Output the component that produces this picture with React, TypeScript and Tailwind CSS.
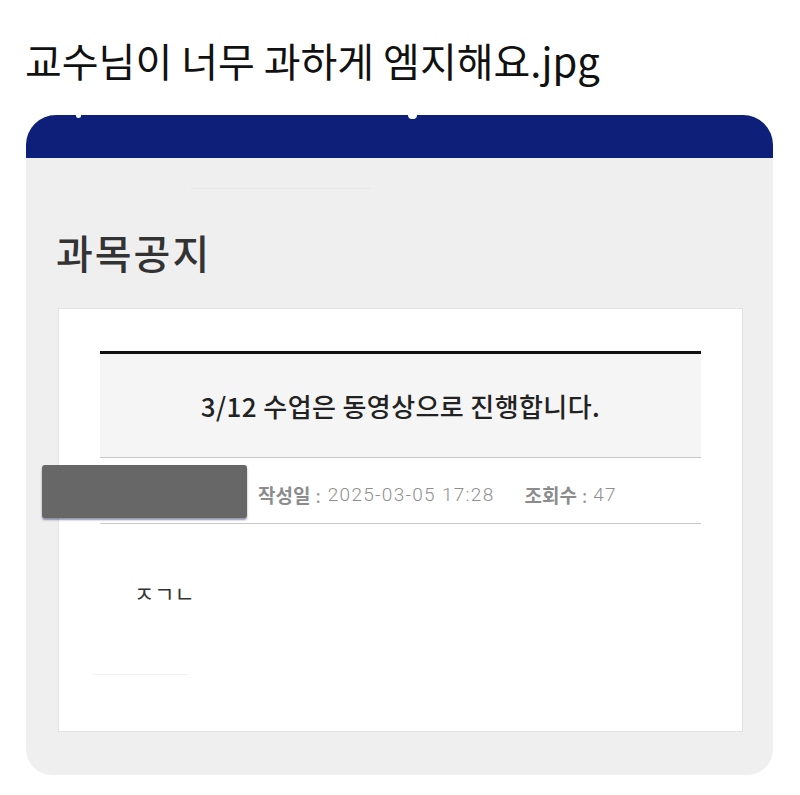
import React from "react";

const KR = { fontFamily: '"Noto Sans CJK KR", "Noto Sans", sans-serif' };
const NUM = { fontFamily: 'Roboto, "Noto Sans CJK KR", sans-serif' };

export default function App() {
  return (
    <div className="w-[800px] h-[795px] bg-white overflow-hidden" style={KR}>
      {/* post title */}
      <h1 className="pl-[25px] pt-[31px] text-[40px] leading-[58px] font-normal text-[#111]">
        교수님이 너무 과하게 엠지해요.jpg
      </h1>

      {/* captured app screen */}
      <div className="ml-[26px] mt-[26px] w-[747px]">
        <div className="relative h-[43px] bg-[#0e1f7a] rounded-t-[30px]">
          <span className="absolute left-[50px] top-0 w-[5px] h-[3px] bg-white rounded-b-full" />
          <span className="absolute left-[382px] top-0 w-[9px] h-[4px] bg-white rounded-b-full" />
        </div>
        <div className="bg-[#efefef] rounded-b-[26px] pb-[43px]">
          <div className="relative pt-[69px] pl-[30px] h-[150px]">
            <span className="absolute left-[165px] top-[30px] w-[180px] h-px bg-[#e6e6e6]" />
            <h2 className="text-[40px] leading-[50px] font-medium text-[#333] tracking-[2px]">과목공지</h2>
          </div>

          <div className="ml-[32px] mr-[30px] h-[424px] bg-white border border-[#e3e3e3] px-[41px] pt-[42px]">
            <div className="h-[3px] bg-[#111]" />
            <div className="h-[103px] bg-[#f5f5f5] flex items-center justify-center">
              <p className="text-[26px] font-medium text-[#222] tracking-[0.4px]">
                3/12 수업은 동영상으로 진행합니다.
              </p>
            </div>
            <div className="h-px bg-[#c9c9c9]" />
            <div className="relative h-[65px] flex items-center pt-[10px] pl-[158px] text-[19px] text-[#999]">
              <div className="absolute left-[-58px] top-[7px] w-[205px] h-[53px] bg-[#676767] rounded-[3px] shadow-[0_2px_2px_rgba(40,40,90,0.5)]" />
              <span className="font-bold text-[#8c8c8c]">작성일</span>
              <span className="ml-[5px] text-[#9a9a9a]">:</span>
              <span className="ml-[7px] font-light text-[#8f8f8f] tracking-[1.3px]" style={NUM}>
                2025-03-05 17:28
              </span>
              <span className="ml-[30px] font-bold text-[#8c8c8c]">조회수</span>
              <span className="ml-[5px] text-[#9a9a9a]">:</span>
              <span className="ml-[6px] font-light text-[#8f8f8f] tracking-[1.3px]" style={NUM}>
                47
              </span>
            </div>
            <div className="h-px bg-[#c9c9c9]" />
            <div className="relative pt-[53px] pl-[34px]">
              <p className="text-[22px] leading-[30px] text-[#333]">ㅈㄱㄴ</p>
              <span className="absolute left-[-7px] top-[150px] w-[95px] h-px bg-[#f0f0f0]" />
            </div>
          </div>
        </div>
      </div>
    </div>
  );
}
